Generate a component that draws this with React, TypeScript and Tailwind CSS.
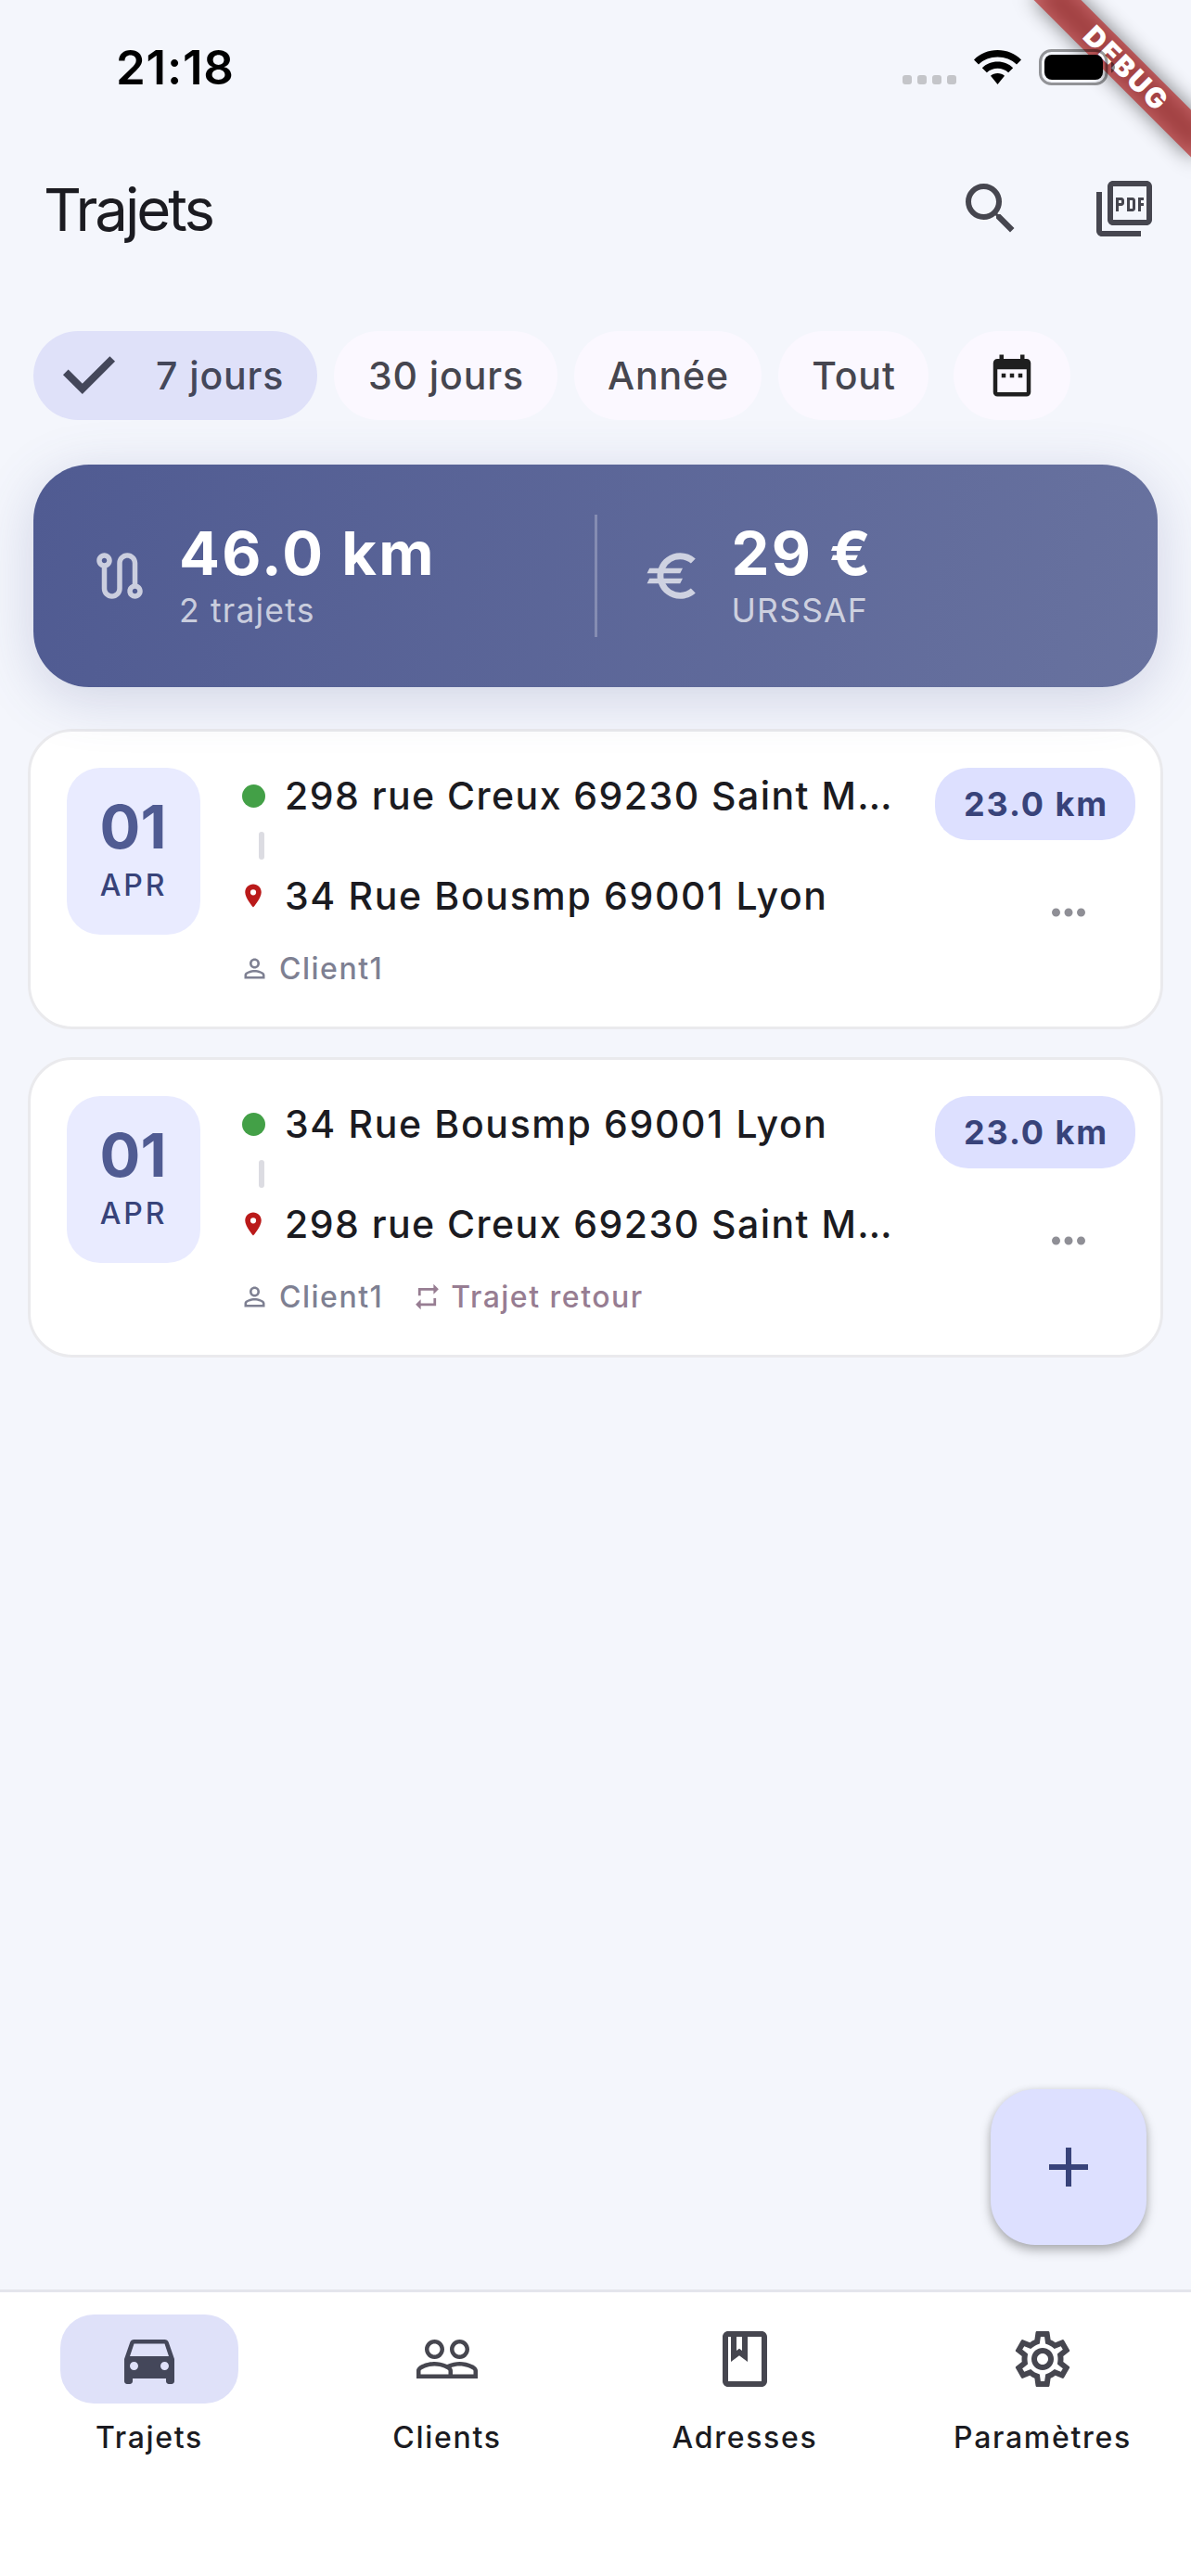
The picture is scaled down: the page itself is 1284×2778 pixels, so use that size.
import type { ReactNode } from "react";
import type { IconType } from "react-icons";
import {
  MdAdd,
  MdDateRange,
  MdDirectionsCar,
  MdEuro,
  MdLocationOn,
  MdMoreHoriz,
  MdOutlineBook,
  MdOutlinePictureAsPdf,
  MdOutlineRoute,
  MdOutlineSettings,
  MdPeopleOutline,
  MdPersonOutline,
  MdRepeat,
  MdSearch,
} from "react-icons/md";

const trips = [
  {
    day: "01",
    month: "APR",
    from: "298 rue Creux 69230 Saint M…",
    to: "34 Rue Bousmp 69001 Lyon",
    client: "Client1",
    distance: "23.0 km",
    isReturn: false,
  },
  {
    day: "01",
    month: "APR",
    from: "34 Rue Bousmp 69001 Lyon",
    to: "298 rue Creux 69230 Saint M…",
    client: "Client1",
    distance: "23.0 km",
    isReturn: true,
  },
];

const tabs = [
  { label: "Trajets", icon: MdDirectionsCar, active: true },
  { label: "Clients", icon: MdPeopleOutline, active: false },
  { label: "Adresses", icon: MdOutlineBook, active: false },
  { label: "Paramètres", icon: MdOutlineSettings, active: false },
];

function StatusBar() {
  return (
    <div className="relative z-30 flex h-[141px] shrink-0 justify-between pt-[53px] pl-[125px] pr-[82px]">
      <span className="text-[51px] leading-[39px] font-semibold tracking-[0.8px] text-black">21:18</span>
      <div className="flex h-[39px] items-center">
        <div className="flex gap-[6px] self-end pb-px">
          {[0, 1, 2, 3].map((i) => (
            <span key={i} className="size-[10px] rounded-[3px] bg-[#c4c5c9]" />
          ))}
        </div>
        <svg className="ml-[19px] h-[37px] w-[51px]" viewBox="0 0 51 37">
          <path d="M25.5 0C35.5 0 44.4 3.9 51 10.4L46 15.4C40.7 10.3 33.5 7.4 25.5 7.4S10.3 10.3 5 15.4L0 10.4C6.6 3.9 15.5 0 25.5 0Z" />
          <path d="M25.5 12.6C32 12.6 37.8 15.1 42.2 19.2L37.1 24.3C34 21.5 30 19.8 25.5 19.8S17 21.5 13.9 24.3L8.8 19.2C13.2 15.1 19 12.6 25.5 12.6Z" />
          <path d="M25.5 25C28.4 25 31 26 33 27.8L25.5 37 18 27.8C20 26 22.6 25 25.5 25Z" />
        </svg>
        <svg className="ml-[19px] h-[39px] w-[82px]" viewBox="0 0 82 39">
          <rect x="1.5" y="1.5" width="71.5" height="36" rx="12" fill="none" stroke="#000" strokeOpacity="0.4" strokeWidth="3" />
          <rect x="6" y="6" width="63" height="27" rx="8" />
          <path d="M78 13.5C80.5 14.5 82 17 82 19.5S80.5 24.5 78 25.5Z" fillOpacity="0.45" />
        </svg>
      </div>
    </div>
  );
}

function DebugRibbon() {
  return (
    <svg className="absolute top-0 right-0 z-20" width="240" height="240" viewBox="0 0 240 240">
      <defs>
        <filter id="ribbon-blur" x="-20%" y="-150%" width="140%" height="400%">
          <feGaussianBlur stdDeviation="11" />
        </filter>
      </defs>
      <g transform="translate(168 72) rotate(45)">
        <rect x="-120" y="-18" width="240" height="36" fillOpacity="0.5" filter="url(#ribbon-blur)" />
        <rect x="-120" y="-18" width="240" height="36" fill="#b71c1c" fillOpacity="0.627" />
        <text x="3" y="10.5" textAnchor="middle" fill="#fff" className="text-[30px] font-black tracking-[2.2px]">
          DEBUG
        </text>
      </g>
    </svg>
  );
}

function AppBar() {
  return (
    <header className="flex h-[168px] shrink-0 items-center pr-[36px] pl-[47px] text-[#46464f]">
      <h1 className="pt-[2px] text-[63.5px] leading-[84px] font-normal tracking-[-3px] text-[#1b1b21]">Trajets</h1>
      <MdSearch className="ml-auto size-[72px]" />
      <MdOutlinePictureAsPdf className="ml-[72px] size-[72px]" />
    </header>
  );
}

function Chip({ className, children }: { className: string; children: ReactNode }) {
  return (
    <button
      className={`flex h-24 shrink-0 items-center rounded-full text-[41px] font-medium tracking-[0.9px] whitespace-nowrap ${className}`}
    >
      {children}
    </button>
  );
}

function Filters() {
  return (
    <div className="mt-[48px] flex gap-[18px] pl-[36px] text-[#46464f]">
      <Chip className="w-[306px] bg-[#dfe1f9] pl-[24px] text-[#44475a]">
        <svg className="mr-[36px] size-[72px]" viewBox="0 0 72 72" fill="none" stroke="currentColor" strokeWidth="8">
          <path d="M10.8 32.4L28.8 50.4L61.2 18" />
        </svg>
        <span className="pt-[2px]">7 jours</span>
      </Chip>
      <Chip className="w-[241px] justify-center bg-[#fbf8ff] pt-[2px] pl-px">30 jours</Chip>
      <Chip className="w-[202px] justify-center bg-[#fbf8ff] pt-[2px] pl-px">Année</Chip>
      <Chip className="w-[162px] justify-center bg-[#fbf8ff] pt-[2px] pl-px">Tout</Chip>
      <Chip className="ml-[9px] w-[126px] justify-center bg-[#fbf8ff] text-[#1f1f1f]">
        <MdDateRange className="size-[54px]" />
      </Chip>
    </div>
  );
}

function Stat({ icon: Icon, value, label }: { icon: IconType; value: string; label: string }) {
  return (
    <div className="flex flex-1 items-center gap-[31px]">
      <Icon className="size-[66px] text-white/70" />
      <div className="pt-[4px]">
        <p className="text-[65px] leading-[72px] font-bold tracking-[2.4px] text-white">{value}</p>
        <p className="text-[35.5px] leading-[52px] tracking-[1.2px] text-white/70">{label}</p>
      </div>
    </div>
  );
}

function Summary() {
  return (
    <section className="relative z-10 mx-[36px] mt-[48px] flex h-[240px] shrink-0 items-center rounded-[60px] bg-[linear-gradient(101.2deg,#505b92,#68729f)] pr-[12px] pl-[60px] shadow-[0_12px_58px_rgba(80,91,146,0.22)]">
      <Stat icon={MdOutlineRoute} value="46.0 km" label="2 trajets" />
      <div className="mr-[48px] h-[132px] w-[3px] bg-white/25" />
      <Stat icon={MdEuro} value="29 €" label="URSSAF" />
    </section>
  );
}

function Address({ text }: { text: string }) {
  // shortened addresses are set a little tighter so they clear the distance badge
  const tracking = text.endsWith("…") ? "tracking-[1.45px]" : "tracking-[1.65px]";
  return <span className={`pt-[2px] text-[41px] font-medium ${tracking}`}>{text}</span>;
}

function TripCard({ trip }: { trip: (typeof trips)[0] }) {
  return (
    <article className="flex h-[324px] rounded-[48px] border-[3px] border-[#eaeaed] bg-white py-[39px] pr-[27px] pl-[39px]">
      <div className="flex h-[180px] w-[144px] flex-col items-center rounded-[36px] bg-[#e9ebff] pt-[28px]">
        <span className="pr-px text-[65px] leading-[72px] font-bold text-[#505b92]">{trip.day}</span>
        <span className="mt-[6px] text-[32px] leading-[42px] font-[550] tracking-[2.8px] text-[#38437a]">
          {trip.month}
        </span>
      </div>

      <div className="ml-[42px] flex flex-1 flex-col whitespace-nowrap text-[#1b1b21]">
        <div className="flex h-[60px] items-center gap-[19px]">
          <span className="mx-[2.5px] size-[25px] rounded-full bg-[#43a047]" />
          <Address text={trip.from} />
        </div>
        <div className="my-[9px] ml-[21px] h-[30px] w-[6px] rounded-full bg-[#dcdce2]" />
        <div className="flex h-[60px] items-center gap-[19px]">
          <MdLocationOn className="size-[30px] text-[#ba1a1a]" />
          <Address text={trip.to} />
        </div>
        <div className="mt-[24px] flex h-[48px] items-center text-[32px] font-medium tracking-[1.5px]">
          <span className="flex items-center gap-[10px] text-[#7e8092]">
            <MdPersonOutline className="size-[33px]" />
            <span className="pt-[2px]">{trip.client}</span>
          </span>
          {trip.isReturn && (
            <span className="ml-[31px] flex items-center gap-[9px] text-[#977d92]">
              <MdRepeat className="size-[33px]" />
              <span className="pt-[2px]">Trajet retour</span>
            </span>
          )}
        </div>
      </div>

      <div className="flex flex-col">
        <span className="flex h-[78px] w-[216px] items-center justify-center rounded-[36px] bg-[#dde0ff] pl-[2px] text-[36px] font-[650] tracking-[1.9px] text-[#38437a]">
          {trip.distance}
        </span>
        <button className="mt-[51px] mr-[45px] self-end">
          <MdMoreHoriz className="size-[54px] text-[#8f8f96]" />
        </button>
      </div>
    </article>
  );
}

function NavBar() {
  return (
    <nav className="mt-auto grid h-[309px] shrink-0 grid-cols-4 border-t-[3px] border-[#e4e5ec] bg-white pt-[24px]">
      {tabs.map(({ label, icon: Icon, active }) => (
        <button key={label} className="flex flex-col items-center">
          <span
            className={`flex h-24 w-[192px] items-center justify-center rounded-[36px] ${
              active ? "bg-[#dfe1f9] text-[#44475a]" : "text-[#46464f]"
            }`}
          >
            <Icon className="size-[72px]" />
          </span>
          <span className="mt-[13px] pl-px text-[32px] leading-[48px] font-[550] tracking-[1.7px] text-[#1b1b21]">
            {label}
          </span>
        </button>
      ))}
    </nav>
  );
}

export default function App() {
  return (
    <div className="relative flex h-[2778px] w-[1284px] flex-col overflow-hidden bg-[#f4f6fc] font-['Inter',sans-serif]">
      <StatusBar />
      <DebugRibbon />
      <AppBar />
      <Filters />
      <Summary />

      <main className="mt-[45px] flex flex-col gap-[30px] px-[30px]">
        {trips.map((trip, i) => (
          <TripCard key={i} trip={trip} />
        ))}
      </main>

      {/* Floating add button */}
      <button className="absolute right-[48px] bottom-[357px] flex size-[168px] items-center justify-center rounded-[48px] bg-[#dde0ff] text-[#38437a] shadow-[0_6px_12px_rgba(0,0,0,0.26),0_1px_9px_rgba(0,0,0,0.1)]">
        <MdAdd className="size-[72px]" />
      </button>

      <NavBar />
    </div>
  );
}
